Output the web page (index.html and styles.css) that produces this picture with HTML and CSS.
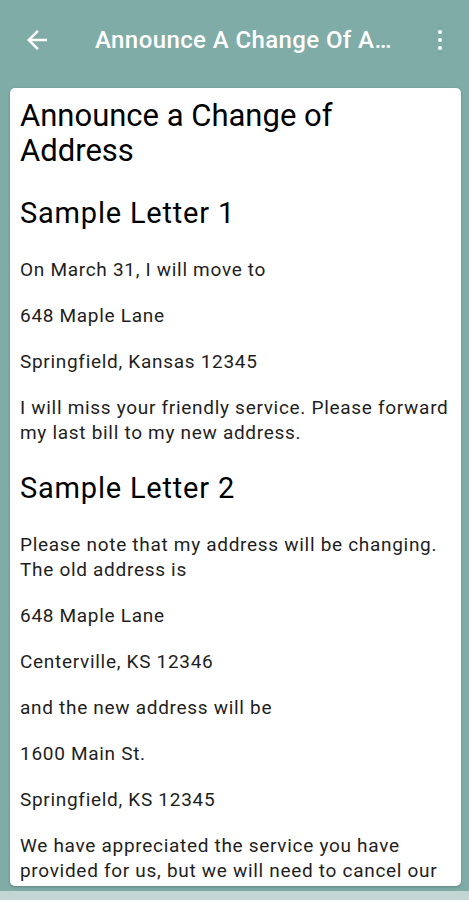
FILE: index.html
```html
<!DOCTYPE html>
<html>
  <head>
    <title>Announce A Change Of Address</title>
    <meta charset="utf-8" />
    <link rel="stylesheet" href="styles.css">
  </head>
  <body>
    <div class="app">
      <header class="toolbar">
        <button class="icon-button back-button" title="Back">
          <svg width="30" height="30" viewBox="0 0 24 24">
            <path d="M20 11H7.83l5.59-5.59L12 4l-8 8 8 8 1.41-1.41L7.83 13H20v-2z" fill="#fff" />
          </svg>
        </button>
        <h1 class="toolbar-title">Announce A Change Of Address</h1>
        <button class="icon-button menu-button" title="More">
          <span class="dot"></span>
          <span class="dot"></span>
          <span class="dot"></span>
        </button>
      </header>

      <main class="card">
        <h1>Announce a Change of Address</h1>

        <h2>Sample Letter 1</h2>
        <p>On March 31, I will move to</p>
        <p>648 Maple Lane</p>
        <p>Springfield, Kansas 12345</p>
        <p>I will miss your friendly service. Please forward my last bill to my new address.</p>

        <h2>Sample Letter 2</h2>
        <p>Please note that my address will be changing. The old address is</p>
        <p>648 Maple Lane</p>
        <p>Centerville, KS 12346</p>
        <p>and the new address will be</p>
        <p>1600 Main St.</p>
        <p>Springfield, KS 12345</p>
        <p>We have appreciated the service you have provided for us, but we will need to cancel our account. We will be moving to a new area and would appreciate a final bill.</p>
      </main>
    </div>
    <div class="nav-edge"></div>
  </body>
</html>
```

FILE: styles.css
```css
body {
  margin: 0;
  height: 900px;
  font-family: Roboto, "Noto Sans", Arial, sans-serif;
  color: #1e1e1e;
  background-color: #80aca8;
  overflow: hidden;
}

.app {
  display: flex;
  flex-direction: column;
  height: 886px;
}

.toolbar {
  display: flex;
  align-items: center;
  height: 80px;
  flex-shrink: 0;
  color: #fff;
}

.icon-button {
  background: none;
  border: none;
  padding: 0;
  cursor: pointer;
}

.back-button {
  display: flex;
  align-items: center;
  justify-content: center;
  width: 48px;
  height: 48px;
  margin-left: 13px;
}

.toolbar-title {
  flex: 1;
  margin: 0 0 0 34px;
  font-size: 24px;
  font-weight: 500;
  letter-spacing: 0.4px;
  white-space: nowrap;
  overflow: hidden;
  text-overflow: ellipsis;
}

.menu-button {
  display: flex;
  flex-direction: column;
  align-items: center;
  gap: 3.5px;
  width: 48px;
  margin: 0 5px 0 12px;
}

.dot {
  width: 4.5px;
  height: 4.5px;
  border-radius: 50%;
  background-color: #fff;
}

.card {
  flex: 1;
  margin: 8px 8px 0 10px;
  padding: 10px 10px 0;
  background-color: #fff;
  border-radius: 5px;
  box-shadow: 0 1px 3px rgba(0, 0, 0, 0.25);
  overflow: hidden;
}

.card h1 {
  margin: 0 0 30px;
  font-size: 31px;
  line-height: 35px;
  font-weight: 400;
  color: #000;
}

.card h2 {
  margin: 28px 0;
  font-size: 29px;
  line-height: 31px;
  font-weight: 400;
  letter-spacing: 0.8px;
  color: #000;
}

.card p {
  margin: 21px 0;
  font-size: 19px;
  line-height: 25px;
  letter-spacing: 0.7px;
}

.nav-edge {
  height: 9px;
  margin-top: 5px;
  background-color: #c3d6d4;
}
```
